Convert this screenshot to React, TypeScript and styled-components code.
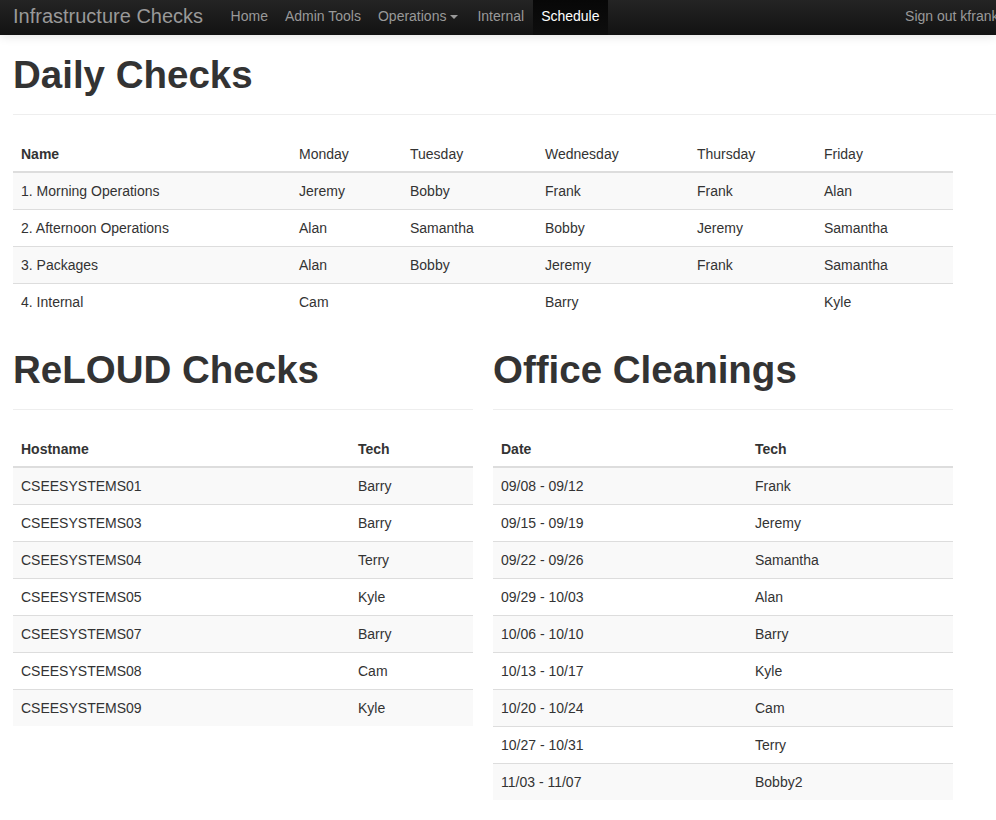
import React from "react";
import styled, { createGlobalStyle } from "styled-components";

const Global = createGlobalStyle`
  html, body { margin: 0; padding: 0; background: #fff; }
  body {
    font-family: "Liberation Sans", Arial, Helvetica, sans-serif;
    font-size: 14px;
    line-height: 20px;
    color: #333;
  }
  * { box-sizing: border-box; }
`;

const Navbar = styled.nav`
  height: 35px;
  display: flex;
  align-items: stretch;
  padding-left: 13px;
  background: linear-gradient(to bottom, #242424 0%, #121212 100%);
  box-shadow: 0 1px 10px rgba(0, 0, 0, 0.12);
  overflow: hidden;
  position: relative;
  z-index: 2;
`;

const Brand = styled.a`
  display: flex;
  align-items: center;
  padding: 0 19px 3px 0;
  font-size: 20px;
  line-height: 20px;
  color: #999;
  text-decoration: none;
  white-space: nowrap;
`;

const NavList = styled.ul`
  display: flex;
  align-items: stretch;
  margin: 0;
  padding: 0;
  list-style: none;
`;

const NavItem = styled.li<{ $active?: boolean }>`
  display: flex;
  align-items: stretch;
  background: ${(p) =>
    p.$active ? "linear-gradient(to bottom, #070707 0%, #0e0e0e 100%)" : "transparent"};
`;

const NavLink = styled.a<{ $active?: boolean }>`
  display: flex;
  align-items: center;
  padding: 0 8.5px 3px;
  font-size: 14px;
  line-height: 20px;
  color: ${(p) => (p.$active ? "#fff" : "#999")};
  text-decoration: none;
  white-space: nowrap;
`;

const Caret = styled.span`
  display: inline-block;
  width: 0;
  height: 0;
  margin: 1px 2px 0 4px;
  border-top: 4px solid #999;
  border-left: 4px solid transparent;
  border-right: 4px solid transparent;
`;

const NavRight = styled.div`
  margin-left: auto;
  margin-right: -11px;
  display: flex;
  align-items: stretch;
`;

const Main = styled.main`
  padding: 20px 0 30px 13px;
`;

const PageHeader = styled.div`
  padding-bottom: 9px;
  margin-bottom: 20px;
  border-bottom: 1px solid #eee;
`;

const Title = styled.h1`
  margin: 0 0 10px;
  font-size: 38.5px;
  line-height: 40px;
  font-weight: bold;
  color: #333;
  white-space: nowrap;
`;

const Columns = styled.div`
  display: grid;
  grid-template-columns: 460px 460px;
  column-gap: 20px;
  align-items: start;
  margin-top: 30px;
`;

const Section = styled.section``;

const Table = styled.table<{ $width: number }>`
  width: ${(p) => p.$width}px;
  border-collapse: collapse;
  border-spacing: 0;
  table-layout: fixed;
  margin: 0;
`;

const Col = styled.col<{ $w: number }>`
  width: ${(p) => p.$w}px;
`;

const Th = styled.th`
  padding: 9px 8px 7px;
  text-align: left;
  vertical-align: bottom;
  font-weight: bold;
  line-height: 20px;
  border-bottom: 2px solid #ddd;
  white-space: nowrap;
`;

const ThPlain = styled(Th)`
  font-weight: normal;
`;

const Tr = styled.tr`
  &:nth-child(odd) > td {
    background: #f9f9f9;
  }
`;

const Td = styled.td`
  padding: 8px;
  line-height: 20px;
  text-align: left;
  vertical-align: top;
  border-top: 1px solid #ddd;
  white-space: nowrap;
`;

const daily = [
  ["1. Morning Operations", "Jeremy", "Bobby", "Frank", "Frank", "Alan"],
  ["2. Afternoon Operations", "Alan", "Samantha", "Bobby", "Jeremy", "Samantha"],
  ["3. Packages", "Alan", "Bobby", "Jeremy", "Frank", "Samantha"],
  ["4. Internal", "Cam", "", "Barry", "", "Kyle"],
];

const reloud = [
  ["CSEESYSTEMS01", "Barry"],
  ["CSEESYSTEMS03", "Barry"],
  ["CSEESYSTEMS04", "Terry"],
  ["CSEESYSTEMS05", "Kyle"],
  ["CSEESYSTEMS07", "Barry"],
  ["CSEESYSTEMS08", "Cam"],
  ["CSEESYSTEMS09", "Kyle"],
];

const cleanings = [
  ["09/08 - 09/12", "Frank"],
  ["09/15 - 09/19", "Jeremy"],
  ["09/22 - 09/26", "Samantha"],
  ["09/29 - 10/03", "Alan"],
  ["10/06 - 10/10", "Barry"],
  ["10/13 - 10/17", "Kyle"],
  ["10/20 - 10/24", "Cam"],
  ["10/27 - 10/31", "Terry"],
  ["11/03 - 11/07", "Bobby2"],
];

function TwoColTable({
  head,
  rows,
  widths,
}: {
  head: [string, string];
  rows: string[][];
  widths: [number, number];
}) {
  return (
    <Table $width={460}>
      <colgroup>
        <Col $w={widths[0]} />
        <Col $w={widths[1]} />
      </colgroup>
      <thead>
        <tr>
          <Th>{head[0]}</Th>
          <Th>{head[1]}</Th>
        </tr>
      </thead>
      <tbody>
        {rows.map((r) => (
          <Tr key={r[0]}>
            <Td>{r[0]}</Td>
            <Td>{r[1]}</Td>
          </Tr>
        ))}
      </tbody>
    </Table>
  );
}

export default function App() {
  const dayWidths = [278, 111, 135, 152, 127, 137];
  return (
    <>
      <Global />
      <Navbar>
        <Brand href="#">Infrastructure Checks</Brand>
        <NavList>
          <NavItem>
            <NavLink href="#">Home</NavLink>
          </NavItem>
          <NavItem>
            <NavLink href="#">Admin Tools</NavLink>
          </NavItem>
          <NavItem>
            <NavLink href="#">
              Operations
              <Caret />
            </NavLink>
          </NavItem>
          <NavItem>
            <NavLink href="#">Internal</NavLink>
          </NavItem>
          <NavItem $active>
            <NavLink href="#" $active>
              Schedule
            </NavLink>
          </NavItem>
        </NavList>
        <NavRight>
          <NavLink href="#">Sign out kfrank</NavLink>
        </NavRight>
      </Navbar>
      <Main>
        <Section>
          <PageHeader>
            <Title>Daily Checks</Title>
          </PageHeader>
          <Table $width={940}>
            <colgroup>
              {dayWidths.map((w, i) => (
                <Col key={i} $w={w} />
              ))}
            </colgroup>
            <thead>
              <tr>
                <Th>Name</Th>
                <ThPlain>Monday</ThPlain>
                <ThPlain>Tuesday</ThPlain>
                <ThPlain>Wednesday</ThPlain>
                <ThPlain>Thursday</ThPlain>
                <ThPlain>Friday</ThPlain>
              </tr>
            </thead>
            <tbody>
              {daily.map((r) => (
                <Tr key={r[0]}>
                  {r.map((c, i) => (
                    <Td key={i}>{c}</Td>
                  ))}
                </Tr>
              ))}
            </tbody>
          </Table>
        </Section>
        <Columns>
          <Section>
            <PageHeader>
              <Title>ReLOUD Checks</Title>
            </PageHeader>
            <TwoColTable head={["Hostname", "Tech"]} rows={reloud} widths={[337, 123]} />
          </Section>
          <Section>
            <PageHeader>
              <Title>Office Cleanings</Title>
            </PageHeader>
            <TwoColTable head={["Date", "Tech"]} rows={cleanings} widths={[254, 206]} />
          </Section>
        </Columns>
      </Main>
    </>
  );
}
